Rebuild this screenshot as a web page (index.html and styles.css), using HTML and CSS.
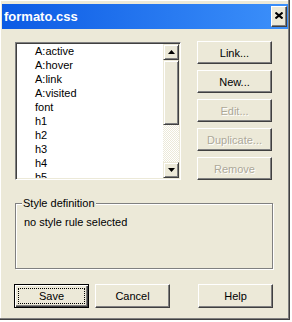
FILE: index.html
```html
<!DOCTYPE html>
<html lang="en">
<head>
    <meta charset="UTF-8">
    <title>formato.css</title>
    <link rel="stylesheet" href="styles.css">
</head>
<body>
    <div class="window">
        <!-- Title bar -->
        <div class="titlebar">
            <span class="title">formato.css</span>
            <button class="close-btn">
                <svg width="8" height="7" viewBox="0 0 8 7">
                    <path d="M0.5 0.5 L7.5 6.5 M7.5 0.5 L0.5 6.5" stroke="#000" stroke-width="2"/>
                </svg>
            </button>
        </div>

        <div class="content">
            <div class="top-row">
                <!-- Style list -->
                <div class="listbox">
                    <ul class="list">
                        <li>A:active</li>
                        <li>A:hover</li>
                        <li>A:link</li>
                        <li>A:visited</li>
                        <li>font</li>
                        <li>h1</li>
                        <li>h2</li>
                        <li>h3</li>
                        <li>h4</li>
                        <li>h5</li>
                    </ul>
                    <div class="scrollbar">
                        <div class="sb-btn">
                            <svg width="7" height="4" viewBox="0 0 7 4"><polygon points="3.5,0 7,4 0,4" fill="#000"/></svg>
                        </div>
                        <div class="sb-thumb"></div>
                        <div class="sb-track"></div>
                        <div class="sb-btn">
                            <svg width="7" height="4" viewBox="0 0 7 4"><polygon points="0,0 7,0 3.5,4" fill="#000"/></svg>
                        </div>
                    </div>
                </div>

                <!-- Actions -->
                <div class="side-buttons">
                    <button class="btn">Link...</button>
                    <button class="btn">New...</button>
                    <button class="btn" disabled>Edit...</button>
                    <button class="btn" disabled>Duplicate...</button>
                    <button class="btn" disabled>Remove</button>
                </div>
            </div>

            <fieldset class="group">
                <legend>Style definition</legend>
                <p class="group-text">no style rule selected</p>
            </fieldset>

            <div class="bottom-row">
                <button class="btn btn-default">Save</button>
                <button class="btn">Cancel</button>
                <button class="btn btn-help">Help</button>
            </div>
        </div>
    </div>
</body>
</html>
```

FILE: styles.css
```css
body {
    margin: 0;
    background: #fff;
    font-family: "Liberation Sans", Arial, sans-serif;
    font-size: 11px;
    color: #000;
}
.window {
    width: 290px;
    height: 320px;
    box-sizing: border-box;
    background: #ece9d8;
    border-right: 1px solid #404040;
    border-bottom: 1px solid #404040;
    box-shadow: inset -1px -1px 0 #808080, inset 1px 1px 0 #fff;
    padding-top: 4px;
}
.titlebar {
    height: 25px;
    margin: 0 1px 0 2px;
    padding: 0 1px 0 2px;
    display: flex;
    align-items: center;
    justify-content: space-between;
    background: linear-gradient(to right, #0c5be4, #3c90fa);
}
.title {
    color: #fff;
    font-weight: bold;
    font-size: 13px;
}
.close-btn {
    width: 16px;
    height: 21px;
    padding: 0 0 2px 0;
    display: flex;
    align-items: center;
    justify-content: center;
    background: #ece9d8;
    border: 1px solid;
    border-color: #fff #404040 #404040 #fff;
    box-shadow: inset -1px -1px 0 #808080;
}
.content {
    padding: 12px 0 0 15px;
}
.top-row {
    display: flex;
    gap: 16px;
    align-items: flex-start;
}
.listbox {
    width: 166px;
    height: 138px;
    margin-top: 1px;
    box-sizing: border-box;
    display: flex;
    background: #fff;
    border: 1px solid;
    border-color: #808080 #fff #fff #808080;
    padding: 1px;
    box-shadow: inset 1px 1px 0 #404040, inset -1px -1px 0 #ece9d8;
}
.list {
    flex: 1;
    margin: 0;
    padding: 0 0 0 18px;
    list-style: none;
    overflow: hidden;
}
.list li {
    height: 14px;
    line-height: 14px;
}
.scrollbar {
    width: 16px;
    display: flex;
    flex-direction: column;
}
.sb-btn, .sb-thumb {
    box-sizing: border-box;
    background: #ece9d8;
    border: 1px solid;
    border-color: #ece9d8 #404040 #404040 #ece9d8;
    box-shadow: inset 1px 1px 0 #fff, inset -1px -1px 0 #808080;
}
.sb-btn {
    height: 16px;
    display: flex;
    align-items: center;
    justify-content: center;
}
.sb-thumb {
    height: 65px;
}
.sb-track {
    flex: 1;
    background: repeating-conic-gradient(#fff 0 25%, #ece9d8 0 50%) 0 0 / 2px 2px;
}
.side-buttons {
    display: flex;
    flex-direction: column;
    gap: 6px;
}
.btn {
    width: 75px;
    height: 23px;
    padding: 0;
    font-family: inherit;
    font-size: 11px;
    color: #000;
    background: #ece9d8;
    border: 1px solid;
    border-color: #fff #404040 #404040 #fff;
    box-shadow: inset -1px -1px 0 #808080;
}
.btn:disabled {
    color: #aca899;
    text-shadow: 1px 1px 0 #fff;
}
.group {
    width: 258px;
    box-sizing: border-box;
    margin: 16px 0 0 0;
    padding: 0 0 0 6px;
    border: 1px solid #808080;
    box-shadow: inset 1px 1px 0 #fff, 1px 1px 0 #fff;
}
.group legend {
    padding: 0 1px;
    line-height: 14px;
    background: #ece9d8;
}
.group-text {
    margin: 6px 0 0 2px;
    height: 52px;
    line-height: 13px;
}
.bottom-row {
    display: flex;
    gap: 6px;
    width: 258px;
    margin-top: 15px;
}
.bottom-row .btn {
    height: 24px;
}
.btn-default {
    margin-left: -1px;
    border-color: #000;
    box-shadow: inset 1px 1px 0 #fff, inset -1px -1px 0 #404040, inset -2px -2px 0 #808080;
    outline: 1px dotted #000;
    outline-offset: -5px;
}
.btn-help {
    margin-left: auto;
}
```
